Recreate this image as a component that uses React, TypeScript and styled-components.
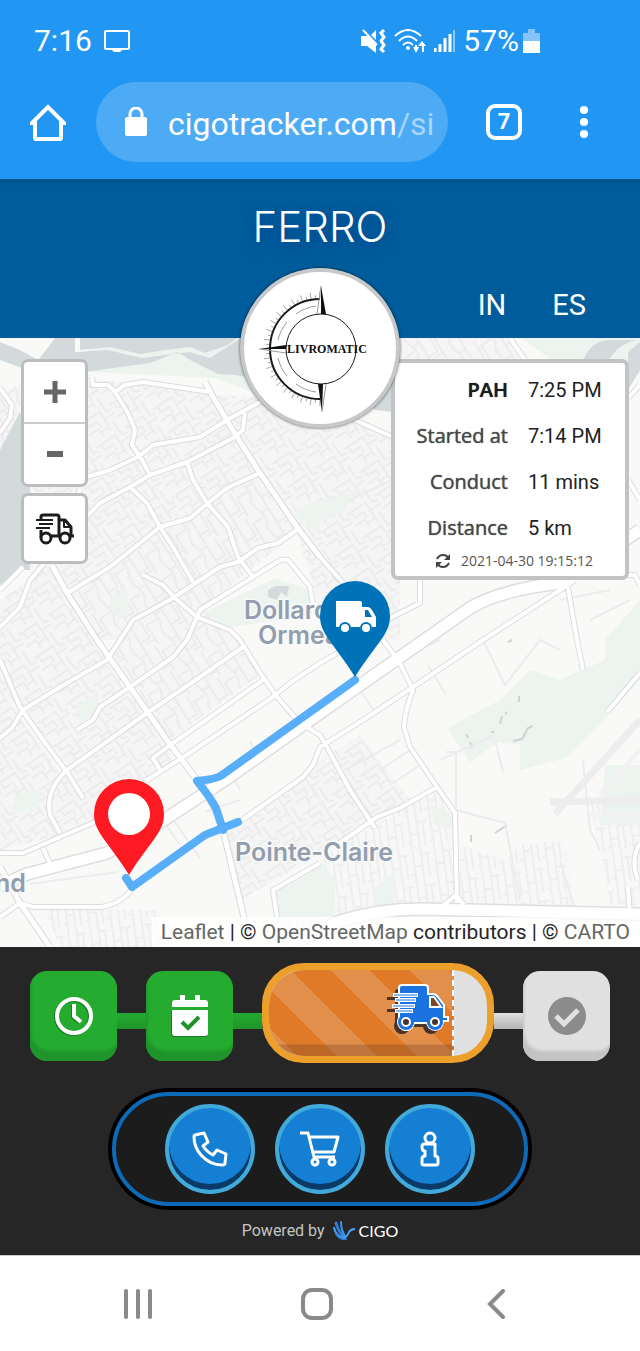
import React from "react";
import styled, { createGlobalStyle, css } from "styled-components";

const GlobalStyle = createGlobalStyle`
  *, *::before, *::after { box-sizing: border-box; }
  body { margin: 0; background: #262626; font-family: Roboto, "Liberation Sans", sans-serif; }
  button { padding: 0; border: 0; background: none; font: inherit; color: inherit; cursor: pointer; }
  a { color: inherit; text-decoration: none; }
  svg { display: block; flex: none; }
`;

/* ---------- page frame ---------- */

const Page = styled.div`
  display: flex;
  flex-direction: column;
  min-height: 100vh;
`;

const BrowserChrome = styled.div`
  background: #2196f3;
  color: #fff;
`;

const StatusBar = styled.div`
  display: flex;
  align-items: center;
  height: 82px;
  padding: 0 100px 0 34px;
  font-size: 30px;
  line-height: 36px;
`;

const Clock = styled.span`
  margin-right: 12px;
`;

const StatusIcons = styled.div`
  display: flex;
  align-items: center;
  gap: 8px;
  margin-left: auto;
`;

const BatteryLevel = styled.div`
  display: flex;
  align-items: center;
  gap: 4px;
`;

const AddressRow = styled.div`
  display: flex;
  align-items: center;
  height: 97px;
  padding: 0 52px 17px 30px;
`;

const IconButton = styled.button`
  display: flex;
  align-items: center;
  justify-content: center;
`;

const AddressPill = styled.div`
  display: flex;
  flex: 1;
  align-items: center;
  gap: 20px;
  min-width: 0;
  height: 80px;
  margin: 0 38px 0 30px;
  padding: 0 10px 0 28px;
  border-radius: 40px;
  background: #4dabf5;
`;

const Address = styled.span`
  overflow: hidden;
  padding-top: 4px;
  font-size: 32px;
  line-height: 40px;
  white-space: nowrap;
`;

const AddressPath = styled.span`
  color: #a9d6fb;
`;

const TabCount = styled.button`
  width: 36px;
  height: 36px;
  margin-right: 58px;
  border: 4px solid #fff;
  border-radius: 9px;
  font-size: 22px;
  font-weight: 700;
  line-height: 28px;
`;

/* ---------- brand header ---------- */

const BrandHeader = styled.header`
  position: relative;
  z-index: 2;
  display: flex;
  flex-direction: column;
  gap: 40px;
  padding: 28px 54px 15px;
  background: linear-gradient(#005189, #005c9b 6px);
  color: #fff;
`;

const BrandName = styled.h1`
  margin: 0;
  font-family: Inter, "Open Sans", sans-serif;
  font-size: 42px;
  font-weight: 300;
  line-height: 40px;
  text-align: center;
  text-shadow: 0 4px 12px #00408a;
`;

const Languages = styled.nav`
  display: flex;
  justify-content: flex-end;
  gap: 46px;
  font-size: 29px;
  line-height: 36px;
`;

const LogoBadge = styled.div`
  position: absolute;
  bottom: -90px;
  left: 50%;
  width: 160px;
  height: 160px;
  margin-left: -80px;
  border: 4px solid #c6c8ca;
  border-radius: 50%;
  background: #fff;
  box-shadow: 0 0 3px rgba(0, 0, 0, 0.7);
`;

/* ---------- map ---------- */

const MapArea = styled.main`
  position: relative;
  display: flex;
  flex: 1;
  flex-direction: column;
  justify-content: space-between;
  min-height: 420px;
  overflow: hidden;
  background: #f7f8f7;
`;

const MapCanvas = styled.svg`
  position: absolute;
  inset: 0;
  width: 100%;
  height: 100%;
`;

const MapOverlay = styled.div`
  position: relative;
  display: flex;
  justify-content: space-between;
  padding: 21px 11px 0 21px;
`;

const MapControls = styled.div`
  display: flex;
  flex-direction: column;
  gap: 6px;
`;

const ControlGroup = styled.div`
  display: flex;
  flex-direction: column;
  border: 3px solid #bcbebe;
  border-radius: 7px;
  background: #fff;
`;

const ControlButton = styled.button<{ $tall?: boolean }>`
  display: flex;
  align-items: center;
  justify-content: center;
  width: 61px;
  height: ${(p) => (p.$tall ? 65 : 60)}px;

  & + & {
    height: 62px;
    border-top: 2px solid #ccc;
  }
`;

const InfoPanel = styled.section`
  width: 238px;
  padding: 4px 13px 5px 11px;
  border: 4px solid #c2c4c4;
  border-radius: 7px;
  background: #fff;
`;

const InfoTable = styled.table`
  width: 100%;
  border-collapse: collapse;
  font-size: 20px;
  line-height: 24px;
`;

const InfoLabel = styled.th<{ $strong?: boolean }>`
  height: 46px;
  padding: 0 20px 0 0;
  color: ${(p) => (p.$strong ? "#1c1c1c" : "#484848")};
  font-family: "Open Sans", sans-serif;
  font-weight: ${(p) => (p.$strong ? 600 : 400)};
  text-align: right;
  text-shadow: 0 0 1px currentColor;
  white-space: nowrap;
`;

const InfoValue = styled.td`
  width: 84px;
  padding: 0;
  color: #222;
  white-space: nowrap;
`;

const Updated = styled.div`
  display: flex;
  align-items: center;
  justify-content: flex-end;
  gap: 10px;
  padding-right: 19px;
  color: #555;
  font-family: "Open Sans", sans-serif;
  font-size: 14px;
  line-height: 20px;
`;

const Attribution = styled.div`
  position: relative;
  align-self: flex-end;
  padding: 0 10px 0 9px;
  background: rgba(255, 255, 255, 0.75);
  color: #262626;
  font-size: 21px;
  line-height: 30px;

  a { color: #666; }
`;

/* ---------- tracker footer ---------- */

const Tracker = styled.footer`
  display: flex;
  flex-direction: column;
  align-items: center;
  padding-top: 16px;
  background: #262626;
`;

const Steps = styled.div`
  display: flex;
  align-items: flex-start;
  width: 100%;
  padding: 0 30px;
`;

const tones = {
  done: css`
    background: #24ab30;
    box-shadow: inset 3px -12px 3px -2px #1f942a;
  `,
  pending: css`
    background: #e0e0e0;
    box-shadow: inset 3px -12px 3px -2px #c3c3c3;
  `,
};

const StepTile = styled.div<{ $tone: "done" | "pending" }>`
  display: flex;
  align-items: center;
  justify-content: center;
  width: 87px;
  height: 90px;
  margin-top: 8px;
  border-radius: 17px;
  ${(p) => tones[p.$tone]}
`;

const Link = styled.div<{ $tone: "done" | "pending" }>`
  width: 29px;
  height: 16px;
  margin-top: 50px;
  background: ${(p) =>
    p.$tone === "done"
      ? "linear-gradient(#24ab30, #1f942a)"
      : "linear-gradient(#e0e0e0, #b4b4b4)"};
`;

const Progress = styled.div`
  flex: 1;
  height: 100px;
  overflow: hidden;
  border: 7px solid #ed9f2c;
  border-radius: 42px;
  background: #e0e0e0;
`;

const ProgressFill = styled.div`
  display: flex;
  align-items: center;
  justify-content: flex-end;
  height: 100%;
  padding: 0 3px 6px 0;
  border-right: 2px dashed #fff;
  background:
    linear-gradient(transparent 74px, rgba(110, 60, 30, 0.3) 75px),
    repeating-linear-gradient(45deg, #e28f4c 0 20px, #de7a28 20px 48px, #e28f4c 48px 56px);
`;

const Actions = styled.div`
  display: flex;
  gap: 20px;
  margin-top: 29px;
  padding: 8px 49px;
  border: 4px solid #0d6ab8;
  border-radius: 60px;
  background: #1c1c1c;
  box-shadow: 0 0 0 4px #000;
`;

const ActionButton = styled.button`
  display: flex;
  align-items: center;
  justify-content: center;
  width: 90px;
  height: 90px;
  border: 4px solid #43a9d9;
  border-radius: 50%;
  background: #157fd4;
  box-shadow: inset 0 -6px 0 #0a3a68;
`;

const PoweredBy = styled.p`
  display: flex;
  align-items: center;
  height: 49px;
  margin: 0;
  color: #c4c4c4;
  font-size: 16px;
  line-height: 20px;
`;

const CigoLink = styled.a`
  display: flex;
  align-items: center;
  gap: 4px;
  margin-left: 8px;
  color: #fff;
  font-family: Lato, sans-serif;
`;

/* ---------- phone navigation ---------- */

const PhoneNav = styled.nav`
  display: flex;
  height: 96px;
  padding: 0 54px 0 48px;
  border-top: 1px solid #ccc;
  background: #fefefe;
`;

const PhoneKey = styled.button`
  display: flex;
  flex: 1;
  align-items: center;
  justify-content: center;
`;

/* ---------- map drawing ---------- */

const majorRoads = [
  "M92 377L93 385H108L115 392L128 413L135 430L132 445L142 460L150 475",
  "M115 392L125 385L143 382L210 392",
  "M87 477L110 470L138 457L153 445L200 437L227 420L258 403L300 385",
  "M83 520L100 503L130 487L150 475L187 462L233 438L243 430L245 413",
  "M67 593L110 567L160 527L190 518L208 503L227 488L260 473",
  "M130 487L147 503L160 527L173 547L193 582",
  "M187 462L193 480L207 503L228 527L238 557L253 577",
  "M297 530L278 543L258 548L238 562L220 567L173 598L133 620L120 640L107 660L60 687L23 710L12 728L0 738",
  "M143 575L163 585L177 600L197 617L230 630L240 640L263 677L277 697L300 723L320 735L327 747L350 790L375 828",
  "M313 603L310 587L290 562Q286 557 277 562L200 610L187 640L173 657L130 687L100 707L93 720L77 730",
  "M0 590L23 567",
  "M0 627L20 607L30 580L43 565L80 490",
  "M0 388L12 405L10 418L0 433",
  "M0 660L20 707L43 740L67 772L83 798",
  "M60 833L50 815Q45 790 67 770L147 713L200 677L243 647",
  "M162 773L153 758L173 743L263 680",
  "M147 780L182 758L273 697L290 683L320 663L360 640",
  "M0 853H23L60 837L93 823L150 800",
  "M43 848L51 866",
  "M0 917L20 903L33 907H100Q120 905 133 888",
  "M238 823L303 777L313 765L320 747L363 720L413 687L483 640L560 590L575 580",
  "M340 843L377 817L400 808L437 787",
  "M383 640L400 663L413 690Q405 710 404 727L410 747L437 787L455 813L457 903",
  "M320 863L273 890L277 917",
  "M567 582L577 640L583 670",
  "M607 712L640 673",
  "M390 618L420 603V580",
  "M320 557L345 585M355 420L395 438",
  "M510 338L525 360M640 385L628 398",
  "M628 480L640 500M628 575H635L640 585",
  "M630 917L628 887M640 843Q630 860 638 880",
  "M440 908L456 895L464 905",
];

const diagonalRoads = [
  "M205 382L213 397L237 437L260 473L297 527L320 557",
  "M52 565L67 593L97 640L130 687L167 740L197 780L213 805L223 830L247 930",
  "M0 867L20 903L50 947",
];

const highways = [
  "M0 886L27 874L107 853L167 818L225 780L320 713L393 662L470 608Q500 590 560 583L640 530",
  "M300 940L340 921Q380 909 420 909L640 914",
];

const minorRoads =
  "M227 765L240 790M250 742L262 760M165 823L180 845M240 800L205 812M360 690L375 712M428 665L446 695M404 656L440 640M446 752H456V850M456 810L505 823M505 823L520 900M495 740L503 772M583 760L590 830L600 850M560 860L575 910M440 760L495 735M380 770L410 750M390 785L420 765M30 884L118 872M170 815L200 858M590 620L630 600M483 640L505 685L540 640L560 650M400 455V580M350 500L392 480M560 600L610 590M345 770L400 740";

const arterial = majorRoads.join("");
const diagonal = diagonalRoads.join("");
const highway = highways.join("");

const Pin = ({ color, children }: { color: string; children: React.ReactNode }) => (
  <>
    <path
      d="M0 61C-7 49-18 35-26 24C-32 15-35 9-35 0A35 35 0 0 1 35 0C35 9 32 15 26 24C18 35 7 49 0 61Z"
      fill={color}
    />
    {children}
  </>
);

const CityMap = () => (
  <MapCanvas viewBox="0 338 640 609" preserveAspectRatio="xMidYMid slice" aria-label="Delivery map">
    <defs>
      <pattern id="blocksA" width="34" height="28" patternUnits="userSpaceOnUse" patternTransform="rotate(-34)">
        <rect width="34" height="28" fill="#f4f5f4" />
        <path
          d="M0 5H22V14H34M0 19H12V28M22 14V28M28 0V8L34 10M5 5V12H15V19M12 23H22M28 20V28"
          fill="none"
          stroke="#ebeceb"
          strokeWidth="2"
        />
      </pattern>
      <pattern id="blocksB" width="30" height="36" patternUnits="userSpaceOnUse" patternTransform="rotate(58)">
        <rect width="30" height="36" fill="#f4f5f4" />
        <path
          d="M0 6H30M0 15Q10 11 15 15T30 15M8 15V27H30M0 31H20V36M20 0V6M3 6V15M24 27V36"
          fill="none"
          stroke="#ebeceb"
          strokeWidth="2"
        />
      </pattern>
      <pattern id="blocksC" width="22" height="32" patternUnits="userSpaceOnUse" patternTransform="rotate(-8)">
        <rect width="22" height="32" fill="#f6f7f6" />
        <path d="M4 0V32M12 0V32M12 8H22M4 20H12M18 8V32M0 28H4" fill="none" stroke="#edeeed" strokeWidth="2" />
      </pattern>
    </defs>

    <rect x="0" y="338" width="640" height="609" fill="#f9faf8" />

    {/* residential blocks */}
    <path d="M30 480L92 380L205 388L260 473L160 525L70 590L20 560Z" fill="url(#blocksA)" />
    <path d="M0 395L35 375L20 470L0 520ZM70 590L160 525L260 475L300 530L200 610L120 640L100 640Z" fill="url(#blocksB)" />
    <path d="M0 600L50 565L95 640L167 740L67 772L0 690Z" fill="url(#blocksA)" />
    <path d="M120 640L200 605L245 640L260 675L170 740L110 655Z" fill="url(#blocksB)" />
    <path d="M0 690L60 772L165 740L175 765L80 830L0 850Z" fill="url(#blocksA)" />
    <path d="M215 395L320 400L400 440V640L330 640L295 527Z" fill="url(#blocksA)" />
    <path d="M320 338H505L520 360H320Z" fill="url(#blocksB)" />
    <path d="M320 760L360 735L410 800L400 808L340 843L240 900L225 835Z" fill="url(#blocksA)" />
    <path d="M340 845L435 790L455 815V905L330 920L280 947L273 890Z" fill="url(#blocksC)" />
    <path d="M460 845L505 860L520 845L565 840L575 910L460 906Z" fill="url(#blocksC)" />
    <path d="M45 910H160V947H60ZM590 800H640V905H610Z" fill="url(#blocksC)" />

    {/* parks */}
    <g fill="#edf3ee">
      <path d="M88 345L230 345L300 385L280 402L215 378L90 372Z" />
      <path d="M205 612L275 578L310 590L312 615L225 628Z" />
      <path d="M447 728L500 700L530 670L560 680L605 660V640L640 600V680L608 715L565 758L520 770V745L498 742L470 762Z" />
      <path d="M320 862L278 890L280 917H335V880Z" />
      <path d="M430 805L455 815V830L435 825Z" />
      <path d="M110 600L125 585L130 610L118 620ZM70 530L85 528V560L75 570ZM320 500L360 490L340 515L320 520ZM295 510L320 500V535L300 520Z" />
      <path d="M75 705L98 695V712L80 724ZM15 795L40 788L38 808L14 812ZM375 888L395 872V905L378 908Z" />
      <path d="M520 338H640V375L560 365Z" />
      <path d="M605 765H640V825H600Z" />
    </g>

    {/* water */}
    <g fill="#d4dadc">
      <path d="M0 342L20 350L38 360L46 350L55 338H75V352L108 350L142 358L165 355L190 352L210 358L230 345L240 338H262V380L235 375L218 374L190 360L178 352L150 363L85 372L70 372L45 390L22 368L0 360Z" />
      <path d="M0 450L20 412L30 440V570L20 570L0 585Z" />
      <path d="M350 385H395V412L375 410Z" />
      <path d="M583 360Q592 340 610 340H636Q618 344 609 360ZM628 352L640 342V370L628 390Z" />
      <path d="M268 590L275 586H289L287 597L281 592L277 600L268 597Z" />
    </g>
    <path d="M80 338H238L228 345L205 353L190 347L165 350L140 354L110 347L80 350Z" fill="#d4dadc" />
    <path
      d="M466 734L468 738M470 742L472 748M491 732H494M500 724L502 716M505 714L507 712M519 696V702M513 741L522 739L528 728L533 726M471 835V842M495 833L507 825M508 642L512 640"
      stroke="#cdd5d3"
      strokeWidth="2"
      fill="none"
    />

    {/* airport */}
    <path d="M550 802L640 800M555 814L640 720" stroke="#ecedec" strokeWidth="7" fill="none" />
    <path d="M590 815H640M600 795L640 750" stroke="#f1f2f1" strokeWidth="5" fill="none" />

    <path d={minorRoads} fill="none" stroke="#ebeceb" strokeWidth="2" />
    <g fill="none" strokeLinejoin="round">
      <path d={arterial} stroke="#dcdcdc" strokeWidth="6" />
      <path d={diagonal} stroke="#dadada" strokeWidth="7" />
      <path d={highway} stroke="#dedede" strokeWidth="14" />
      <path d={arterial} stroke="#fff" strokeWidth="4" />
      <path d={diagonal} stroke="#fff" strokeWidth="5" />
      <path d={highway} stroke="#fff" strokeWidth="11" />
    </g>

    {/* place names */}
    <g
      fill="#929eae"
      stroke="#f8f9f8"
      strokeWidth="3"
      paintOrder="stroke"
      fontFamily="Inter, sans-serif"
      fontSize="25"
      fontWeight="600"
    >
      <text x="244" y="619">Dollard</text>
      <text x="258" y="644">Ormeaux</text>
      <text x="235" y="861">Pointe-Claire</text>
      <text x="-5" y="892">nd</text>
    </g>

    {/* route */}
    <g fill="none" stroke="#58aef9" strokeWidth="8" strokeLinecap="round" strokeLinejoin="round">
      <path d="M355 680L222 775Q217 779 197 781Q214 802 217 811L223 830" />
      <path d="M238 822L205 835L132 887L126 878" />
    </g>

    <g transform="translate(355 616)">
      <Pin color="#0072b8">
        <path
          d="M-19-15H5Q7-15 7-13V-9H13Q15-9 17-6L21 1V11H17A6 6 0 0 1 5 11H-4A6 6 0 0 1-16 11H-19Z"
          fill="#fff"
        />
        <path d="M10-6H13L17 1H10Z" fill="#0072b8" />
        <circle cx="-10" cy="12" r="6" fill="#0072b8" />
        <circle cx="11" cy="12" r="6" fill="#0072b8" />
        <circle cx="-10" cy="12" r="4" fill="#fff" />
        <circle cx="11" cy="12" r="4" fill="#fff" />
      </Pin>
    </g>
    <g transform="translate(129 814)">
      <Pin color="#fd1a22">
        <circle r="21" fill="#fff" />
      </Pin>
    </g>
  </MapCanvas>
);

/* ---------- icons ---------- */

const StatusGlyphs = () => (
  <>
    <svg width="25" height="24" viewBox="0 0 25 24" aria-hidden="true">
      <path d="M0 7H6L9 9L15 16V24L6 17H0Z" fill="#fff" />
      <path d="M15 1V11L10 6Z" fill="#fff" />
      <path d="M2 1L16 16" stroke="#fff" strokeWidth="2" />
      <path d="M23 1L20 4L23 8L20 12L23 16L20 20L23 23" fill="none" stroke="#fff" strokeWidth="3" />
      <path d="M18 5V20" stroke="#2196f3" strokeWidth="1" />
    </svg>
    <svg width="32" height="26" viewBox="0 0 32 26" aria-hidden="true">
      <g fill="none" stroke="#fff" strokeWidth="2">
        <path d="M1 8Q14-4 27 8" />
        <path d="M5 13Q14 4 23 13" />
        <path d="M9 17Q14 12 19 17" />
      </g>
      <circle cx="14" cy="20" r="2" fill="#fff" />
      <path d="M19 19H21V17H23V19H25L22 25ZM26 18H24L28 13L32 18H30V24H28V18Z" fill="#fff" />
    </svg>
    <svg width="21" height="24" viewBox="0 0 21 24" aria-hidden="true">
      <path d="M1 19V23M6 15V23M11 9V23M16 5V23" stroke="#fff" strokeWidth="3" />
      <path d="M20 1V23" stroke="#90caf9" strokeWidth="2" />
    </svg>
  </>
);

const Livromatic = () => {
  const ticks = Array.from({ length: 37 }, (_, i) => ((90 + i * 5) * Math.PI) / 180);
  return (
    <svg width="152" height="152" viewBox="4 4 152 152" role="img" aria-label="Livromatic">
      <g stroke="#a5a5a5" strokeWidth="1">
        {ticks.map((a, i) => {
          const r = i % 2 ? 54 : 57;
          return (
            <line
              key={i}
              x1={80 + 51 * Math.cos(a)}
              y1={81 + 51 * Math.sin(a)}
              x2={80 + r * Math.cos(a)}
              y2={81 + r * Math.sin(a)}
            />
          );
        })}
      </g>
      <path d="M80 31A50 50 0 0 0 80 131" fill="none" stroke="#1a1a1a" strokeWidth="2" />
      <path d="M76 38A43 43 0 0 0 56 46M47 54A43 43 0 0 0 38 72M38 90A43 43 0 0 0 47 108M56 116A43 43 0 0 0 76 124" fill="none" stroke="#999" strokeWidth="1" />
      <circle cx="81" cy="81" r="35" fill="#fff" stroke="#1a1a1a" strokeWidth="1" />
      <path d="M81 18L86 46H81ZM82 144L78 116H83ZM19 81L46 77V81Z" fill="#111" />
      <path d="M81 18L77 46M82 144L86 116M19 81L46 85" fill="none" stroke="#999" strokeWidth="1" />
      <text x="87" y="85" textAnchor="middle" fontFamily="'Liberation Serif', serif" fontWeight="700" fontSize="12" fill="#111">
        LIVROMATIC
      </text>
    </svg>
  );
};

const TruckOutline = () => (
  <svg width="38" height="32" viewBox="0 0 38 32" aria-hidden="true">
    <g fill="none" stroke="#1c1c1c" strokeWidth="3" strokeLinejoin="round">
      <path d="M5 7V4Q5 2 7 2H21Q23 2 23 4V23H15M5 17V24" />
      <path d="M23 7H29L35 14V23H38" />
      <path d="M28 8V14H34" strokeWidth="2" />
      <path d="M0 7H17M3 11H17M0 15H14" strokeWidth="2" />
      <circle cx="10" cy="25" r="5" fill="#fff" />
      <circle cx="29" cy="25" r="5" fill="#fff" />
    </g>
  </svg>
);

const truckBody =
  "M12 5Q12 2 15 2H38Q41 2 41 5V11H46Q49 11 51 14L57 22V34H61V38H54A7 7 0 0 1 41 40H26A7 7 0 0 1 12 40Z";

const wheels = [19, 48];

const TruckSolid = () => (
  <svg width="66" height="54" viewBox="-4 0 66 54" aria-hidden="true">
    <g transform="translate(-4 4)" fill="#4a3429">
      <path d={truckBody} />
      {wheels.map((x) => (
        <circle key={x} cx={x} cy="39" r="8" />
      ))}
      <path d="M4 10H14V13H4ZM4 22H14V25H4Z" />
    </g>
    {wheels.map((x) => (
      <circle key={x} cx={x} cy="39" r="9" fill="#fff" />
    ))}
    <path d={truckBody} fill="#1a73e0" stroke="#fff" strokeWidth="2" />
    <path d="M43 14H47L54 24H43Z" fill="#7a4526" stroke="#fff" strokeWidth="2" />
    <path d="M6 12H31M8 17H29M5 23H28M8 28H26" stroke="#fff" strokeWidth="4" />
    <path d="M7 12H30M9 17H28M6 23H27M9 28H25" stroke="#1a73e0" strokeWidth="1" />
    {wheels.map((x) => (
      <g key={x}>
        <circle cx={x} cy="39" r="8" fill="#1a73e0" />
        <circle cx={x} cy="39" r="4" fill="#4a3429" stroke="#fff" strokeWidth="2" />
      </g>
    ))}
  </svg>
);

const facts = [
  { label: "PAH", value: "7:25 PM", strong: true },
  { label: "Started at", value: "7:14 PM" },
  { label: "Conduct", value: "11 mins" },
  { label: "Distance", value: "5 km" },
];

export default function App() {
  return (
    <Page>
      <GlobalStyle />
      <BrowserChrome>
        <StatusBar>
          <Clock>7:16</Clock>
          <svg width="27" height="24" viewBox="0 0 27 24" aria-hidden="true">
            <rect x="1" y="2" width="24" height="18" rx="1" fill="none" stroke="#fff" strokeWidth="2" />
            <path d="M8 19H18V21L16 23H10L8 21Z" fill="#fff" />
          </svg>
          <StatusIcons>
            <StatusGlyphs />
            <BatteryLevel>
              57%
              <svg width="17" height="24" viewBox="0 0 17 24" aria-hidden="true">
                <path d="M5 0H12V4H17V13H0V4H5Z" fill="#84c4f8" />
                <path d="M0 12H17V24H0Z" fill="#fff" />
              </svg>
            </BatteryLevel>
          </StatusIcons>
        </StatusBar>
        <AddressRow>
          <IconButton aria-label="Home">
            <svg width="36" height="38" viewBox="0 0 36 38">
              <path d="M2 20L18 4L34 20H31V35Q31 36 30 36H6Q5 36 5 35V20Z" fill="none" stroke="#fff" strokeWidth="4" />
            </svg>
          </IconButton>
          <AddressPill>
            <svg width="24" height="30" viewBox="0 0 24 30" aria-hidden="true">
              <rect x="1" y="10" width="22" height="19" rx="2" fill="#fff" />
              <path d="M6 11V7A6 6 0 0 1 18 7V11" fill="none" stroke="#fff" strokeWidth="3" />
            </svg>
            <Address>
              cigotracker.com<AddressPath>/si</AddressPath>
            </Address>
          </AddressPill>
          <TabCount aria-label="7 open tabs">7</TabCount>
          <IconButton aria-label="More options">
            <svg width="8" height="34" viewBox="0 0 8 34" fill="#fff">
              <circle cx="4" cy="5" r="4" />
              <circle cx="4" cy="17" r="4" />
              <circle cx="4" cy="29" r="4" />
            </svg>
          </IconButton>
        </AddressRow>
      </BrowserChrome>

      <BrandHeader>
        <BrandName>FERRO</BrandName>
        <Languages>
          <a href="#in">IN</a>
          <a href="#es">ES</a>
        </Languages>
        <LogoBadge>
          <Livromatic />
        </LogoBadge>
      </BrandHeader>

      <MapArea>
        <CityMap />
        <MapOverlay>
          <MapControls>
            <ControlGroup>
              <ControlButton aria-label="Zoom in">
                <svg width="22" height="22" viewBox="0 0 22 22">
                  <path d="M0 11H22M11 0V22" stroke="#666" strokeWidth="5" />
                </svg>
              </ControlButton>
              <ControlButton aria-label="Zoom out">
                <svg width="16" height="6" viewBox="0 0 16 6">
                  <path d="M0 3H16" stroke="#666" strokeWidth="6" />
                </svg>
              </ControlButton>
            </ControlGroup>
            <ControlGroup>
              <ControlButton $tall aria-label="Centre on truck">
                <TruckOutline />
              </ControlButton>
            </ControlGroup>
          </MapControls>
          <InfoPanel>
            <InfoTable>
              <tbody>
                {facts.map((f) => (
                  <tr key={f.label}>
                    <InfoLabel scope="row" $strong={f.strong}>
                      {f.label}
                    </InfoLabel>
                    <InfoValue>{f.value}</InfoValue>
                  </tr>
                ))}
              </tbody>
            </InfoTable>
            <Updated>
              <svg width="16" height="16" viewBox="0 0 16 16" aria-hidden="true">
                <path d="M2 6Q4 2 8 2T13 5M14 10Q12 14 8 14T3 11" fill="none" stroke="#444" strokeWidth="2" />
                <path d="M15 1V7H9ZM1 15V9H7Z" fill="#444" />
              </svg>
              <time dateTime="2021-04-30T19:15:12">2021-04-30 19:15:12</time>
            </Updated>
          </InfoPanel>
        </MapOverlay>
        <Attribution>
          <a href="#leaflet">Leaflet</a> | © <a href="#osm">OpenStreetMap</a> contributors | ©{" "}
          <a href="#carto">CARTO</a>
        </Attribution>
      </MapArea>

      <Tracker>
        <Steps>
          <StepTile $tone="done">
            <svg width="40" height="40" viewBox="0 0 40 40" aria-hidden="true">
              <g fill="none" stroke="#1a7e24" strokeWidth="4" transform="translate(-1 1)">
                <circle cx="20" cy="20" r="17" />
                <path d="M20 8V20L27 26" />
              </g>
              <g fill="none" stroke="#fff" strokeWidth="4">
                <circle cx="20" cy="20" r="17" />
                <path d="M20 8V20L27 26" />
              </g>
            </svg>
          </StepTile>
          <Link $tone="done" />
          <StepTile $tone="done">
            <svg width="38" height="42" viewBox="0 0 38 42" aria-hidden="true">
              <path d="M0 16H36V42H3Q0 42 0 38Z" fill="#1a7e24" />
              <path d="M1 12V8Q1 5 4 5H9V0H14V5H24V0H29V5H34Q37 5 37 8V12ZM1 15H37V38Q37 41 34 41H4Q1 41 1 38Z" fill="#fff" />
              <path d="M11 27L17 33L28 22" fill="none" stroke="#1f942a" strokeWidth="4" />
            </svg>
          </StepTile>
          <Link $tone="done" />
          <Progress role="progressbar" aria-valuenow={85} aria-valuemin={0} aria-valuemax={100} aria-label="Delivery progress">
            <ProgressFill style={{ width: "85%" }}>
              <TruckSolid />
            </ProgressFill>
          </Progress>
          <Link $tone="pending" />
          <StepTile $tone="pending">
            <svg width="40" height="40" viewBox="0 0 40 40" aria-hidden="true">
              <circle cx="20" cy="20" r="19" fill="#8c8c8c" />
              <path d="M9 20L17 28L31 14" fill="none" stroke="#e0e0e0" strokeWidth="5" />
            </svg>
          </StepTile>
        </Steps>

        <Actions>
          <ActionButton aria-label="Call">
            <svg width="36" height="36" viewBox="0 0 36 36" fill="none" stroke="#fff" strokeWidth="3" strokeLinejoin="round">
              <path d="M3 4L12 2L16 11L11 15Q15 21 21 24L25 19L34 23L33 32Q33 34 30 34Q18 34 9 24Q2 16 2 6Q2 4 3 4Z" />
            </svg>
          </ActionButton>
          <ActionButton aria-label="Order">
            <svg width="40" height="36" viewBox="0 0 40 36" fill="none" stroke="#fff" strokeWidth="3" strokeLinejoin="round">
              <path d="M0 2H8L14 26H35M9 6H38L34 21H13" />
              <circle cx="15" cy="31" r="3" />
              <circle cx="32" cy="31" r="3" />
            </svg>
          </ActionButton>
          <ActionButton aria-label="Information">
            <svg width="20" height="36" viewBox="0 0 20 36" fill="none" stroke="#fff" strokeWidth="3" strokeLinejoin="round">
              <circle cx="10" cy="7" r="5" />
              <path d="M4 13H15V25Q18 25 18 28V32Q18 34 16 34H4Q2 34 2 32V28Q2 25 5 25V20Q2 20 2 16Q2 13 4 13" />
            </svg>
          </ActionButton>
        </Actions>

        <PoweredBy>
          Powered by
          <CigoLink href="#cigo">
            <svg width="22" height="20" viewBox="0 0 22 20" aria-hidden="true" fill="none" strokeLinecap="round">
              <path d="M3 2Q5 10 11 16" stroke="#2f7fd8" strokeWidth="3" />
              <path d="M8 1Q8 9 12 15" stroke="#3e98ea" strokeWidth="2" />
              <path d="M1 7Q3 15 11 17Q14 16 16 11Q18 8 22 8" stroke="#4da3ee" strokeWidth="2" />
              <path d="M3 13Q7 19 13 18" stroke="#2f7fd8" strokeWidth="2" />
            </svg>
            CIGO
          </CigoLink>
        </PoweredBy>
      </Tracker>

      <PhoneNav>
        <PhoneKey aria-label="Recent apps">
          <svg width="30" height="30" viewBox="0 0 30 30">
            <path d="M3 2V28M15 2V28M27 2V28" stroke="#8a8a8a" strokeWidth="4" strokeLinecap="round" />
          </svg>
        </PhoneKey>
        <PhoneKey aria-label="Home">
          <svg width="32" height="32" viewBox="0 0 32 32">
            <rect x="2" y="2" width="28" height="28" rx="9" fill="none" stroke="#8a8a8a" strokeWidth="4" />
          </svg>
        </PhoneKey>
        <PhoneKey aria-label="Back">
          <svg width="18" height="30" viewBox="0 0 18 30">
            <path d="M16 2L3 15L16 28" fill="none" stroke="#8a8a8a" strokeWidth="4" strokeLinecap="round" />
          </svg>
        </PhoneKey>
      </PhoneNav>
    </Page>
  );
}
